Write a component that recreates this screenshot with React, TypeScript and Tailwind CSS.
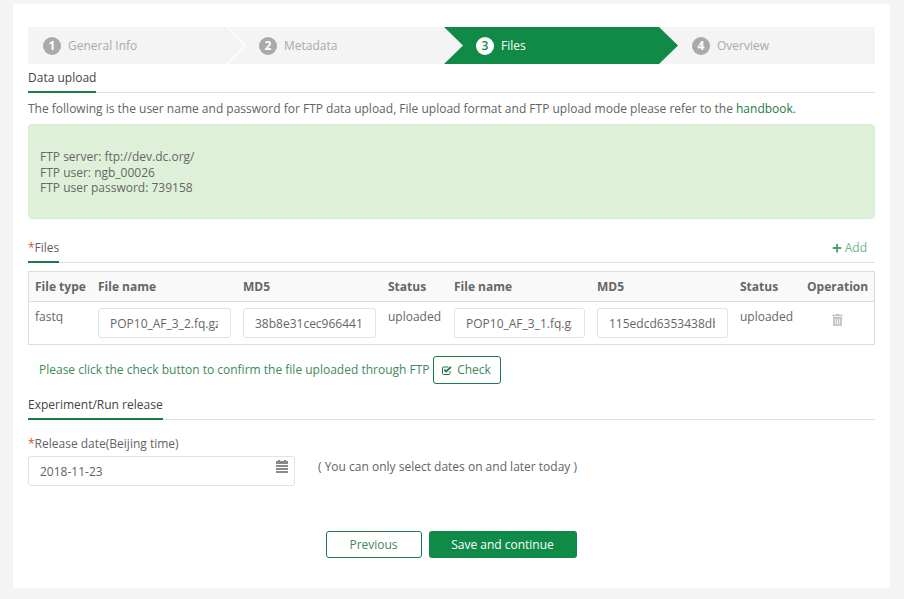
import { FaPlus, FaTrashAlt } from "react-icons/fa";

function Circle({ n, active }: { n: number; active?: boolean }) {
  return (
    <span
      className={
        active
          ? "flex h-[18px] w-[18px] items-center justify-center rounded-full bg-white text-[12px] font-semibold leading-none text-[#0f8a47]"
          : "flex h-[18px] w-[18px] items-center justify-center rounded-full bg-[#aaaaaa] text-[12px] font-bold leading-none text-white"
      }
    >
      {n}
    </span>
  );
}

function Chevron() {
  return (
    <svg className="absolute right-[-18px] top-0 z-10" width="19" height="37" viewBox="0 0 19 37" fill="none">
      <path d="M0 0 L18 18.5 L0 37" stroke="#ffffff" strokeWidth="1.2" />
    </svg>
  );
}

function CheckSquare() {
  return (
    <svg width="10" height="9" viewBox="0 0 10 9" fill="none" className="flex-none">
      <path d="M8 5 V7.5 Q8 8.5 7 8.5 H1.5 Q0.5 8.5 0.5 7.5 V2 Q0.5 1 1.5 1 H6.5" stroke="#1f7a4c" strokeWidth="1" />
      <path d="M2.3 3.6 L4.2 5.5 L9 0.9" stroke="#1f7a4c" strokeWidth="1.8" />
    </svg>
  );
}

function CalendarIcon() {
  return (
    <svg width="12" height="13" viewBox="0 0 12 13" className="absolute right-[6px] top-[3px]" fill="#8a8a8a">
      <rect x="2" y="0" width="2" height="2" />
      <rect x="8" y="0" width="2" height="2" />
      <rect x="0" y="1" width="12" height="3" />
      <rect x="0" y="5" width="12" height="2" />
      <rect x="0" y="8" width="12" height="2" />
      <rect x="0" y="11" width="12" height="2" />
    </svg>
  );
}

function Tab({ children, className = "" }: { children: React.ReactNode; className?: string }) {
  return (
    <div className={"flex border-b border-[#e0e0e0] " + className}>
      <div className="-mb-px border-b-2 border-[#1a7a48] pb-[5px] leading-[17px]">{children}</div>
    </div>
  );
}

function Field({ value, w }: { value: string; w: string }) {
  return (
    <input
      readOnly
      value={value}
      className={"h-[30px] rounded-[3px] border border-[#e2e2e2] bg-white pl-[11px] pr-[12px] text-[12px] text-[#666] outline-none " + w}
    />
  );
}

const th = "border-b border-[#dddddd] px-[6px] text-left font-bold text-[#666]";
const td = "px-[6px] pt-[6px] pb-[6px] align-top text-[#666]";

export default function App() {
  return (
    <div
      className="h-[599px] w-[904px] overflow-hidden bg-[#f4f4f4] pt-1 pl-[13px] text-[12px] text-[#636363]"
      style={{ fontFamily: '"Open Sans", sans-serif' }}
    >
      <div className="h-[584px] w-[877px] bg-white px-[15px] pt-[23px]">
        <div className="flex h-[37px] w-[847px] bg-[#f4f4f4] text-[#aaaaaa]">
          <div className="relative flex w-[200px] flex-none items-center gap-[7px] pl-[15px]">
            <Circle n={1} />
            General Info
            <Chevron />
          </div>
          <div className="flex w-[216px] flex-none items-center gap-[7px] pl-[31px]">
            <Circle n={2} />
            Metadata
          </div>
          <div className="flex w-[234px] flex-none items-center gap-[7px] bg-[#0f8a47] pl-[32px] text-white [clip-path:polygon(0_0,215px_0,100%_50%,215px_100%,0_100%,19px_50%)]">
            <Circle n={3} active />
            Files
          </div>
          <div className="flex flex-1 items-center gap-[7px] pl-[14px]">
            <Circle n={4} />
            Overview
          </div>
        </div>

        <Tab className="mt-[5px] text-[#444]">Data upload</Tab>

        <p className="mt-[7px] leading-[17px]">
          The following is the user name and password for FTP data upload, File upload format and FTP upload mode please
          refer to the <span className="text-[#1a7a48]">handbook</span>.
        </p>

        <div className="mt-[7px] h-[95px] w-[847px] rounded-[4px] border border-[#d9ecd2] bg-[#dff0d8] pt-[24px] pl-[11px] leading-[15.5px] text-[#666]">
          <div>FTP server: ftp://dev.dc.org/</div>
          <div>FTP user: ngb_00026</div>
          <div>FTP user password: 739158</div>
        </div>

        <div className="relative mt-5">
          <Tab>
            <span className="text-[#d9531e]">*</span>Files
          </Tab>
          <div className="absolute right-2 top-0 flex items-center gap-[3px] leading-[17px] text-[#6fb583]">
            <FaPlus className="h-[10px] w-[10px] text-[#45a361]" />
            Add
          </div>
        </div>

        <table className="mt-2 w-[847px] table-fixed border-separate border-spacing-0 border border-[#dddddd] text-[12px]">
          <colgroup>
            <col className="w-[63px]" />
            <col className="w-[145px]" />
            <col className="w-[145px]" />
            <col className="w-[66px]" />
            <col className="w-[143px]" />
            <col className="w-[143px]" />
            <col className="w-[67px]" />
            <col />
          </colgroup>
          <thead>
            <tr className="h-[30px] bg-[#f9f9f9]">
              <th className={th}>File type</th>
              <th className={th}>File name</th>
              <th className={th}>MD5</th>
              <th className={th}>Status</th>
              <th className={th}>File name</th>
              <th className={th}>MD5</th>
              <th className={th}>Status</th>
              <th className={th}>Operation</th>
            </tr>
          </thead>
          <tbody>
            <tr>
              <td className={td}>fastq</td>
              <td className={td}>
                <Field value="POP10_AF_3_2.fq.gz" w="w-[133px]" />
              </td>
              <td className={td}>
                <Field value="38b8e31cec9664415a" w="w-[133px]" />
              </td>
              <td className={td}>uploaded</td>
              <td className={td}>
                <Field value="POP10_AF_3_1.fq.gz" w="w-[131px]" />
              </td>
              <td className={td}>
                <Field value="115edcd6353438dbf0a1" w="w-[131px]" />
              </td>
              <td className={td}>uploaded</td>
              <td className={td}>
                <FaTrashAlt className="mx-auto mt-[6px] h-[12px] w-[11px] text-[#c4c4c4]" />
              </td>
            </tr>
          </tbody>
        </table>

        <div className="mt-[11px] flex items-center gap-[3px] pl-[11px] text-[#3d8a5c]">
          <span>Please click the check button to confirm the file uploaded through FTP</span>
          <button className="flex h-[28px] w-[68px] items-center justify-center gap-[5px] rounded-[3px] border border-[#1a7a48] text-[#3d8a5c]">
            <CheckSquare />
            Check
          </button>
        </div>

        <Tab className="mt-[12px] text-[#444]">Experiment/Run release</Tab>

        <div className="mt-[15px] leading-[17px]">
          <span className="text-[#d9531e]">*</span>Release date(Beijing time)
        </div>
        <div className="mt-[4px] flex items-start">
          <div className="relative h-[30px] w-[267px] rounded-[3px] border border-[#e2e2e2] pl-[11px] leading-[30px]">
            2018-11-23
            <CalendarIcon />
          </div>
          <span className="ml-[23px] mt-[2px] leading-[17px]">( You can only select dates on and later today )</span>
        </div>

        <div className="mt-[45px] flex justify-center gap-[7px] pr-[1px]">
          <button className="h-[27px] w-[96px] rounded-[3px] border border-[#1a7a48] pt-[1px] text-[#3d8a5c]">Previous</button>
          <button className="h-[27px] w-[148px] rounded-[3px] bg-[#0f8a47] text-white">Save and continue</button>
        </div>
      </div>
    </div>
  );
}
